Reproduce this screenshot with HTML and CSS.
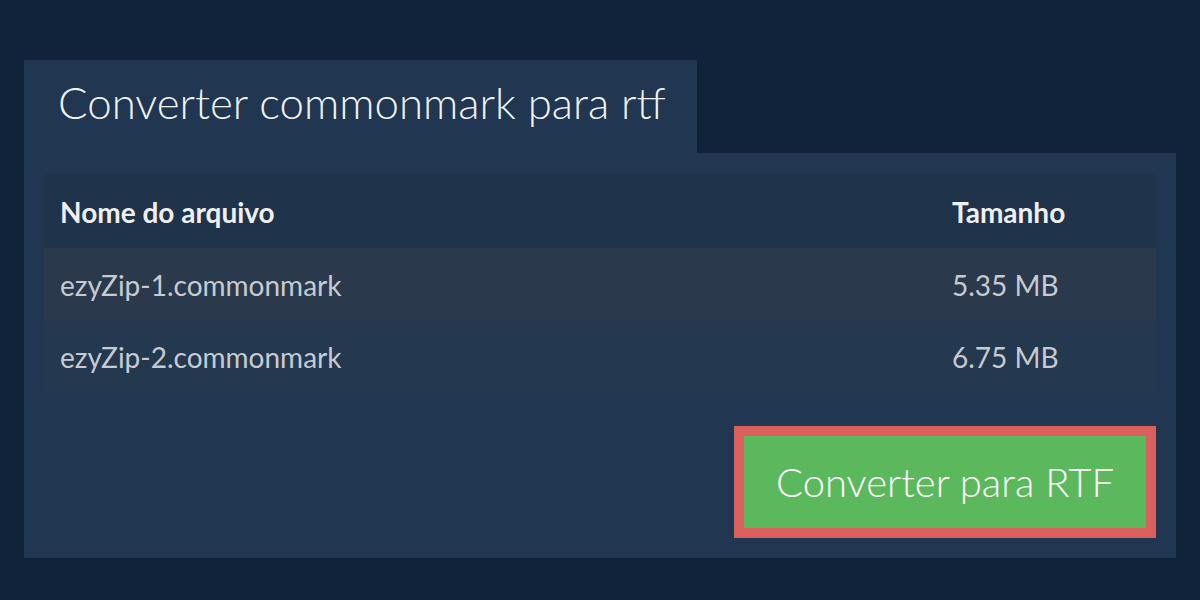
FILE: index.html
```html
<!DOCTYPE html>
<html lang="pt">
<head>
<meta charset="utf-8">
<link rel="stylesheet" href="styles.css">
</head>
<body>
<div class="wrap">
  <div class="tab"><h1 class="title">Converter commonmark para rtf</h1></div>
  <div class="panel">
    <table class="files">
      <thead>
        <tr class="head"><th class="c-name">Nome do arquivo</th><th class="c-size">Tamanho</th></tr>
      </thead>
      <tbody>
        <tr class="row odd"><td class="c-name">ezyZip-1.commonmark</td><td class="c-size">5.35 MB</td></tr>
        <tr class="row even"><td class="c-name">ezyZip-2.commonmark</td><td class="c-size">6.75 MB</td></tr>
      </tbody>
    </table>
    <div class="actions">
      <button class="convert">Converter para RTF</button>
    </div>
  </div>
</div>
</body>
</html>
```
FILE: styles.css
```css
html, body {
  margin: 0;
  padding: 0;
}
body {
  background: #10233a;
  font-family: Lato, "Open Sans", sans-serif;
  width: 1200px;
  height: 600px;
  overflow: hidden;
}
.wrap {
  padding: 60px 24px 0 24px;
}
.tab {
  display: inline-block;
  background: #213650;
  height: 93px;
  box-sizing: border-box;
  padding: 0 31px 0 34px;
}
.title {
  margin: 0;
  font-weight: 300;
  font-size: 43.8px;
  line-height: 84px;
  color: #f2f2f2;
}
.panel {
  background: #213650;
  padding: 21px 20px 20px 20px;
}
.files {
  width: 100%;
  border-collapse: collapse;
  font-size: 28px;
}
.files th, .files td {
  text-align: left;
  padding: 0 0 0 16px;
}
.head {
  background: #1f334b;
  height: 74px;
  color: #efefef;
}
.head th {
  font-weight: 700;
  padding-top: 2px;
}
.row td {
  color: #c6cbd2;
}
.odd {
  background: #2a3a4c;
  height: 73px;
}
.even {
  background: #243850;
  height: 72px;
}
.c-size {
  width: 204px;
}
.actions {
  display: flex;
  justify-content: flex-end;
  padding-top: 33px;
}
.convert {
  background: #5cb85c;
  border: 10px solid #db5f5c;
  color: #ffffff;
  font-family: Lato, "Open Sans", sans-serif;
  font-weight: 300;
  font-size: 40px;
  height: 112px;
  padding: 0 32px 0 32px;
  line-height: 1;
}
```
